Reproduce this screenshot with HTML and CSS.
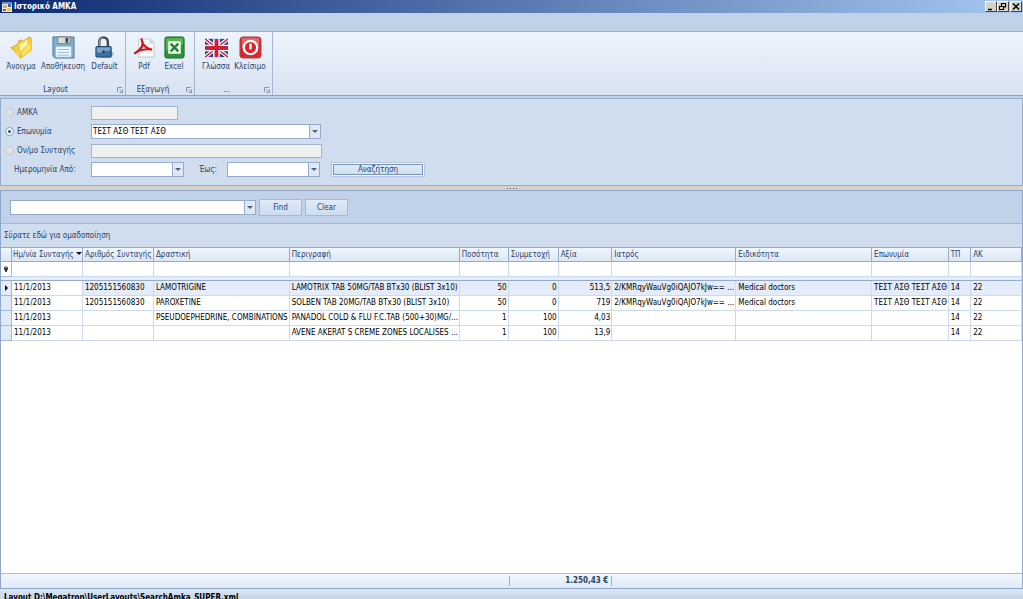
FILE: index.html
```html
<!DOCTYPE html>
<html lang="el">
<head>
<meta charset="utf-8">
<title>Ιστορικό ΑΜΚΑ</title>
<link rel="stylesheet" href="styles.css">
</head>
<body>
<header class="titlebar">
  <svg class="app-icon" viewBox="0 0 10 10" aria-hidden="true"><rect width="10" height="10" fill="#e8ecf4"/><rect y="0" width="10" height="2" fill="#6f8fd0"/><rect x="1" y="3" width="4" height="3" fill="#e8b020"/><rect x="6" y="2" width="3" height="3" fill="#3a62c4"/><rect x="1" y="7" width="3" height="2" fill="#c8402c"/><rect x="5" y="6" width="4" height="3" fill="#f0c838"/></svg>
  <h1 class="title">Ιστορικό ΑΜΚΑ</h1>
  <div class="window-buttons">
    <button class="win-btn" type="button" aria-label="Minimize"><svg viewBox="0 0 10 9"><path d="M2 7.500h4" stroke="#000" stroke-width="1.500"/></svg></button>
    <button class="win-btn" type="button" aria-label="Restore"><svg viewBox="0 0 10 9"><path d="M3.500 4V1.500h4v3.500H6M1.500 4.500h4v3h-4zM3.500 1.500h4M1.500 4.500h4" fill="none" stroke="#000" stroke-width="1.200"/></svg></button>
    <button class="win-btn win-close" type="button" aria-label="Close"><svg viewBox="0 0 10 9"><path d="M2 1.500l6 6M8 1.500l-6 6" stroke="#000" stroke-width="1.500"/></svg></button>
  </div>
</header>
<div class="tabstrip"></div>

<nav class="ribbon">
  <section class="group">
    <div class="group-items">
      <button class="tool tool-lg" type="button">
        <svg viewBox="0 0 24 24"><path d="M1 12l7-3 1-4 3-1 1 2 7-5 2 1v13l-11 8z" fill="#f3cf3a" stroke="#d9a91e"/><path d="M1 12l10 6L22 4v11l-11 8z" fill="#fbe258" stroke="#e0b62c" stroke-width=".6"/><path d="M10 9l8-5v5l-7 7z" fill="#fff6a8"/><path d="M11 18v5" stroke="#dca823"/></svg>
        <span>Άνοιγμα</span></button>
      <button class="tool tool-lg" type="button">
        <svg viewBox="0 0 24 24"><path d="M1 1h22v22H3l-2-2z" fill="#7fb0cd" stroke="#4b7897"/><path d="M6 1h13v7H6z" fill="#dcdcda" stroke="#77797a"/><path d="M14 2h3v5h-3z" fill="#3c4854"/><path d="M4 11h16v11H4z" fill="#f5faff" stroke="#9bc0d8" stroke-width=".6"/><path d="M6 14h12M6 17h12M6 20h12" stroke="#81b6e2"/></svg>
        <span>Αποθήκευση</span></button>
      <button class="tool tool-lg" type="button">
        <svg viewBox="0 0 24 24"><path d="M17 14l5 4-3 5H8z" fill="#a9b8ca"/><path d="M6.500 11V6a4.500 4.500 0 0 1 9 0v5" fill="none" stroke="#444b54" stroke-width="2.600"/><path d="M6.500 11V6a4.500 4.500 0 0 1 4-4" fill="none" stroke="#a6adb5" stroke-width="1"/><rect x="3" y="11" width="16" height="11" rx="1" fill="#3d719f" stroke="#1f466c"/><path d="M4 12h14v3c-5 0-8 3-14 2z" fill="#79a6cb"/><path d="M11 15v3" stroke="#17334f" stroke-width="2"/></svg>
        <span>Default</span></button>
    </div>
    <div class="group-foot"><span>Layout</span><button class="launcher" type="button" aria-label="Layout options"><svg viewBox="0 0 6 6"><path d="M.5 5V.5H5M2.500 2.500l2 2M5.500 2.500v3h-3" fill="none" stroke="#8396b4"/></svg></button></div>
  </section>
  <section class="group group-export">
    <div class="group-items">
      <button class="tool tool-sm" type="button">
        <svg viewBox="0 0 24 24"><path d="M6 3h12l4 4v15H6z" fill="#f7f7f8" stroke="#c3c8cf"/><path d="M18 3v4h4" fill="#ddd" stroke="#c3c8cf"/><path d="M9 3.500c0 4 3 9 10 10.500M9 3.500c3 6-1 11-7 14.500M3 17.500c4-3 9-4 16-3.500" fill="none" stroke="#c9191c" stroke-width="2.200" stroke-linecap="round" stroke-linejoin="round"/></svg>
        <span>Pdf</span></button>
      <button class="tool tool-sm" type="button">
        <svg viewBox="0 0 24 24"><rect x="2" y="1" width="20" height="22" rx="2" fill="#2f9238" stroke="#176b23"/><path d="M3 2h18v7L3 15z" fill="#56b34e"/><rect x="5.500" y="5.500" width="13" height="13" fill="#f4faf1"/><path d="M8 8l8 8M16 8l-8 8" stroke="#268033" stroke-width="2.600"/></svg>
        <span>Excel</span></button>
    </div>
    <div class="group-foot"><span>Εξαγωγή</span><button class="launcher" type="button" aria-label="Export options"><svg viewBox="0 0 6 6"><path d="M.5 5V.5H5M2.500 2.500l2 2M5.500 2.500v3h-3" fill="none" stroke="#8396b4"/></svg></button></div>
  </section>
  <section class="group group-more">
    <div class="group-items">
      <button class="tool tool-md" type="button">
        <svg viewBox="0 0 24 24"><path d="M0 3h24v19H0z" fill="#28458b"/><path d="M0 3l24 19M24 3L0 22" stroke="#fff" stroke-width="4"/><path d="M0 3l24 19M24 3L0 22" stroke="#cf2039" stroke-width="1.500"/><path d="M12 3v19M0 12.500h24" stroke="#fff" stroke-width="7"/><path d="M12 3v19M0 12.500h24" stroke="#cf2039" stroke-width="4"/></svg>
        <span>Γλώσσα</span></button>
      <button class="tool tool-md" type="button">
        <svg viewBox="0 0 24 24"><rect x="1" y="1" width="22" height="22" rx="3" fill="#d3282e" stroke="#b0484c"/><path d="M3 2h18v7L3 13z" fill="#e56669"/><circle cx="12" cy="12" r="7" fill="#d3282e" stroke="#fff" stroke-width="2.400"/><path d="M12 8v6" stroke="#fff" stroke-width="2.400"/></svg>
        <span>Κλείσιμο</span></button>
    </div>
    <div class="group-foot"><span>...</span><button class="launcher" type="button" aria-label="More options"><svg viewBox="0 0 6 6"><path d="M.5 5V.5H5M2.500 2.500l2 2M5.500 2.500v3h-3" fill="none" stroke="#8396b4"/></svg></button></div>
  </section>
</nav>

<form class="criteria">
  <div class="field-row"><label class="choice"><input type="radio" name="by">ΑΜΚΑ</label><input class="box box-amka" type="text" aria-label="ΑΜΚΑ" disabled></div>
  <div class="field-row"><label class="choice"><input type="radio" name="by" checked>Επωνυμία</label><span class="combo combo-name"><input type="text" aria-label="Επωνυμία" value="ΤΕΣΤ ΑΣΘ ΤΕΣΤ ΑΣΘ"><button type="button" aria-label="Επιλογή"></button></span></div>
  <div class="field-row"><label class="choice"><input type="radio" name="by">Ον/μο Συνταγής</label><input class="box box-rx" type="text" aria-label="Ον/μο Συνταγής" disabled></div>
  <div class="field-row"><label class="date-label" for="from">Ημερομηνία Από:</label><span class="combo combo-date"><input id="from" type="text"><button type="button" aria-label="Επιλογή"></button></span><label class="until-label" for="until">Έως:</label><span class="combo combo-date"><input id="until" type="text"><button type="button" aria-label="Επιλογή"></button></span><button class="search-btn" type="button"><span>Αναζήτηση</span></button></div>
</form>
<div class="splitter"><i></i><i></i><i></i><i></i></div>

<main class="grid">
  <div class="findbar"><span class="combo combo-find"><input type="text" aria-label="Find"><button type="button" aria-label="Επιλογή"></button></span><button class="btn" type="button">Find</button><button class="btn" type="button">Clear</button></div>
  <div class="groupbar">Σύρατε εδώ για ομαδοποίηση</div>
  <div class="rows">
    <table class="data">
      <colgroup><col class="c-ind"><col class="c-date"><col class="c-num"><col class="c-sub"><col class="c-desc"><col class="c-qty"><col class="c-part"><col class="c-val"><col class="c-doc"><col class="c-spec"><col class="c-name"><col class="c-tp"><col></colgroup>
      <thead>
        <tr><th></th><th class="sorted">Ημ/νία Συνταγής<span class="sort"></span></th><th>Αριθμός Συνταγής</th><th>Δραστική</th><th>Περιγραφή</th><th>Ποσότητα</th><th>Συμμετοχή</th><th>Αξία</th><th>Ιατρός</th><th>Ειδικότητα</th><th>Επωνυμία</th><th>ΤΠ</th><th>ΑΚ</th></tr>
        <tr class="filter"><td class="ind"><svg viewBox="0 0 6 6"><circle cx="3" cy="2.500" r="2" fill="#111"/><path d="M3 3v3" stroke="#111" stroke-width="1.500"/><circle cx="3" cy="2" r=".7" fill="#fff"/></svg></td><td></td><td></td><td></td><td></td><td></td><td></td><td></td><td></td><td></td><td></td><td></td><td></td></tr>
        <tr class="gap"><td colspan="13"></td></tr>
      </thead>
      <tbody>
        <tr class="selected"><td class="ind"><svg viewBox="0 0 6 6"><path d="M2 0l3 3-3 3z" fill="#000"/></svg></td><td class="focused">11/1/2013</td><td>1205151560830</td><td>LAMOTRIGINE</td><td>LAMOTRIX TAB 50MG/TAB BTx30 (BLIST 3x10)</td><td class="n">50</td><td class="n">0</td><td class="n">513,5</td><td>2/KMRqyWauVg0iQAJO7kJw== ...</td><td>Medical doctors</td><td>ΤΕΣΤ ΑΣΘ ΤΕΣΤ ΑΣΘ</td><td>14</td><td>22</td></tr>
        <tr><td class="ind"></td><td>11/1/2013</td><td>1205151560830</td><td>PAROXETINE</td><td>SOLBEN TAB 20MG/TAB BTx30 (BLIST 3x10)</td><td class="n">50</td><td class="n">0</td><td class="n">719</td><td>2/KMRqyWauVg0iQAJO7kJw== ...</td><td>Medical doctors</td><td>ΤΕΣΤ ΑΣΘ ΤΕΣΤ ΑΣΘ</td><td>14</td><td>22</td></tr>
        <tr><td class="ind"></td><td>11/1/2013</td><td></td><td>PSEUDOEPHEDRINE, COMBINATIONS</td><td>PANADOL COLD &amp; FLU F.C.TAB (500+30)MG/...</td><td class="n">1</td><td class="n">100</td><td class="n">4,03</td><td></td><td></td><td></td><td>14</td><td>22</td></tr>
        <tr><td class="ind"></td><td>11/1/2013</td><td></td><td></td><td>AVENE AKERAT S CREME ZONES LOCALISES ...</td><td class="n">1</td><td class="n">100</td><td class="n">13,9</td><td></td><td></td><td></td><td>14</td><td>22</td></tr>
      </tbody>
    </table>
  </div>
  <table class="totals">
    <colgroup><col class="c-ind"><col class="c-date"><col class="c-num"><col class="c-sub"><col class="c-desc"><col class="c-qty"><col class="c-part"><col class="c-val"><col class="c-doc"><col class="c-spec"><col class="c-name"><col class="c-tp"><col></colgroup>
    <tbody><tr><td colspan="6"></td><td colspan="2"><div class="sum">1.250,43 €</div></td><td colspan="5"></td></tr></tbody>
  </table>
</main>
<footer class="status">Layout D:\Megatron\UserLayouts\SearchAmka_SUPER.xml</footer>
</body>
</html>
```

FILE: styles.css
```css
* { box-sizing: border-box; }
body {
  margin: 0;
  height: 100vh;
  display: flex;
  flex-direction: column;
  overflow: hidden;
  background: #c0d1e8;
  color: #2c4267;
  font: 8px/10px "DejaVu Sans Condensed", "DejaVu Sans", sans-serif;
}
button, input { font: inherit; color: inherit; margin: 0; padding: 0; border: 0; border-radius: 0; }
button { background: none; }
svg { display: block; }

.titlebar {
  flex: none;
  height: 13px;
  display: flex;
  align-items: center;
  gap: 2px;
  padding: 0 1px 0 2px;
  background: linear-gradient(90deg, #0c2a72, #a4c8ef);
}
.app-icon { width: 10px; height: 10px; }
.title { margin: 0; font-size: 8px; line-height: 10px; font-weight: bold; color: #fff; }
.window-buttons { display: flex; margin-left: auto; }
.win-btn { width: 12px; height: 11px; background: #d6d2c9; border: 1px solid; border-color: #fff #45423e #45423e #fff; }
.win-btn svg { width: 10px; height: 9px; }
.win-close { margin-left: 1px; }
.tabstrip { flex: none; height: 19px; background: #c0d1e8; border-bottom: 1px solid #94add0; }

.ribbon {
  flex: none;
  display: flex;
  height: 64px;
  background: linear-gradient(#edf4fd, #d8e3f1);
  border-bottom: 1px solid #8ea4c1;
}
.group { display: flex; flex-direction: column; justify-content: space-between; border-right: 1px solid #a5b8d2; }
.group-items { display: flex; padding-top: 4px; }
.group-export .group-items { padding: 4px 5px 0 3px; }
.group-more .group-items { padding: 4px 5px 0 4px; }
.tool { display: flex; flex-direction: column; align-items: center; gap: 3px; white-space: nowrap; }
.tool svg { width: 23px; height: 23px; }
.tool-lg { width: 42px; }
.tool-lg:last-child { width: 41px; }
.tool-md { width: 34px; }
.tool-sm { width: 30px; }
.group-foot { position: relative; text-align: center; padding-right: 14px; }
.launcher { position: absolute; right: 2px; bottom: 2px; }
.launcher svg { width: 6px; height: 6px; }

.criteria {
  flex: none;
  display: flex;
  flex-direction: column;
  margin-top: 2px;
  padding: 4px 0 6px;
  background: #d0ddee;
  border: 1px solid #93acce;
}
.field-row { display: flex; align-items: center; height: 19px; }
.choice { width: 90px; display: flex; align-items: center; gap: 3px; padding-left: 4px; }
.choice input { appearance: none; width: 9px; height: 9px; border: 1px solid #c3c7cc; border-radius: 50%; background: #dfe3e8; }
.choice input:checked { border-color: #7f9cc4; background: radial-gradient(#38598c 1px, #fff 2px); }
.date-label { width: 90px; padding-left: 13px; }
.until-label { width: 43px; padding-left: 15px; }
.box { height: 14px; background: #f0f0f0; border: 1px solid #a0b5d2; }
.box-amka { width: 87px; }
.box-rx { width: 231px; }
.combo { display: flex; height: 15px; background: #fff; border: 1px solid #94abcc; }
.combo input { flex: 1; min-width: 0; padding-left: 1px; color: #000; background: none; }
.combo button { width: 11px; display: grid; place-items: center; background: #dfe9f6; border-left: 1px solid #94abcc; }
.combo button::before { content: ""; border: 3px solid transparent; border-top-color: #4d6184; border-bottom: 0; }
.combo-name { width: 230px; }
.combo-date { width: 93px; }
.combo-find { width: 246px; }
.search-btn { width: 94px; height: 15px; margin-left: 11px; padding: 1px; border: 1px solid #b6c8e0; background: #f1f6fc; }
.search-btn span { display: block; height: 11px; line-height: 10px; border: 1px solid #7895bd; background: linear-gradient(#e2ebf7, #cfdef1); }

.splitter { flex: none; height: 4px; display: flex; justify-content: center; align-items: center; gap: 2px; background: #d6d3ce; }
.splitter i { width: 1px; height: 1px; background: #555; }

.grid { flex: 1; min-height: 0; display: flex; flex-direction: column; border: 1px solid #8ea7ca; }
.findbar { height: 33px; display: flex; align-items: center; gap: 3px; padding-left: 9px; background: #c0d1e8; border-bottom: 1px solid #a3b7d4; }
.btn { width: 43px; height: 17px; padding-top: 1px; border: 1px solid #a5b9d7; background: linear-gradient(#e1eaf6, #cddcf0); }
.groupbar { height: 23px; padding: 7px 3px; background: #d0ddee; }
.rows { flex: 1; min-height: 0; background: #fff; }

table { width: 100%; table-layout: fixed; border-collapse: separate; border-spacing: 0; }
.c-ind { width: 11px; }
.c-date, .c-num { width: 6.95%; }
.c-sub, .c-spec { width: 13.3%; }
.c-desc { width: 16.65%; }
.c-qty { width: 4.8%; }
.c-part { width: 4.9%; }
.c-val { width: 5.25%; }
.c-doc { width: 12.15%; }
.c-name { width: 7.5%; }
.c-tp { width: 2.2%; }
.data th, .data td { height: 15px; padding: 0 1px 0 2px; overflow: hidden; white-space: nowrap; text-align: left; border-right: 1px solid #ccdaec; border-bottom: 1px solid #ccdaec; }
.data th { font-weight: normal; background: linear-gradient(#f0f6fd, #dbe7f5); border-top: 1px solid #94abcc; border-right-color: #94abcc; border-bottom-color: #94abcc; }
.data .sorted { padding: 0 0 0 1px; }
.data tbody { color: #000; }
.data .n { text-align: right; }
.data .ind { padding: 0 2px; background: #dfeaf7; border-color: #a5b9d5; }
.data .filter .ind { background: #fff; }
.ind svg { width: 6px; height: 6px; }
.data .gap td { height: 4px; background: #e3ecf7; border-bottom-color: #94abcc; }
.data .selected td { background: #e3ecf8; }
.data .selected .focused { background: #fff; }
.sort { display: inline-block; margin: 0 0 2px 2px; border: 3px solid transparent; border-top-color: #111; border-bottom: 0; }

.totals { flex: none; background: linear-gradient(#f0f6fd, #deeaf7); border-top: 1px solid #b2bfce; }
.totals td { height: 14px; padding: 0; }
.sum { height: 10px; padding-right: 3px; text-align: right; font-weight: bold; border: solid #a3b0c3; border-width: 0 1px; }
.status { flex: none; height: 10px; padding: 4px 4px 0; overflow: hidden; white-space: nowrap; background: linear-gradient(#dbe6f3, #c6d5e9); color: #000; font-weight: bold; }
```
